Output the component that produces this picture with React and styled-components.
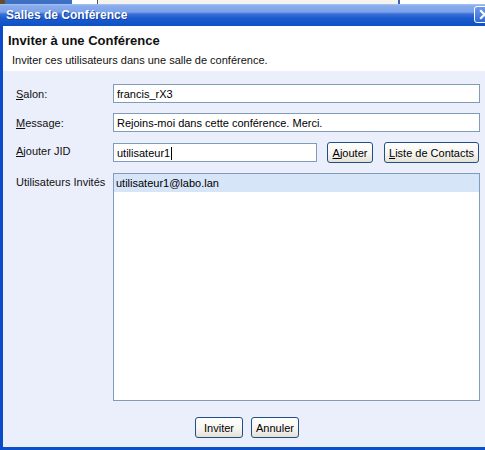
import React from "react";
import styled, { createGlobalStyle } from "styled-components";

const GlobalStyle = createGlobalStyle`
  html, body {
    margin: 0;
    padding: 0;
    background: #ffffff;
  }
  body {
    width: 485px;
    height: 450px;
    overflow: hidden;
    font-family: "Liberation Sans", Arial, sans-serif;
    font-size: 11px;
    color: #000;
  }
`;

function App() {
  return (
    <>
      <GlobalStyle />
      <Page>
        <BehindBar>
          <Seg $w={5} $bg="#6b4a2a" />
          <Seg $w={67} $bg="#3d6fc2" />
          <Seg $w={25} $bg="#ffffff" />
          <MenuStrip>
            <MenuItem>Accueil</MenuItem>
            <MenuItem>Contacts</MenuItem>
            <MenuItem>Actions</MenuItem>
            <MenuItem>Aide</MenuItem>
          </MenuStrip>
          <Seg $w={2} $bg="#3a63c0" />
          <Seg $w={85} $bg="#ffffff" />
        </BehindBar>

        <TitleBar>
          <TitleText>Salles de Conférence</TitleText>
          <CloseButton>
            <svg width="13" height="13" viewBox="0 0 13 13">
              <path d="M3 3 L10 10 M10 3 L3 10" stroke="#fff" strokeWidth="2.2" strokeLinecap="square" />
            </svg>
          </CloseButton>
        </TitleBar>

        <Frame>
          <Header>
            <HeaderTitle>Inviter à une Conférence</HeaderTitle>
            <HeaderSub>Inviter ces utilisateurs dans une salle de conférence.</HeaderSub>
          </Header>

          <Body>
            <Form>
              <Label>
                <u>S</u>alon:
              </Label>
              <Field>francis_rX3</Field>

              <Label>
                <u>M</u>essage:
              </Label>
              <Field>Rejoins-moi dans cette conférence. Merci.</Field>

              <Label $top>
                <u>A</u>jouter JID
              </Label>
              <JidRow>
                <Field $grow>
                  utilisateur1
                  <Caret />
                </Field>
                <Button $w={46} $ml={10}>
                  <u>A</u>jouter
                </Button>
                <Button $w={95} $ml={11}>
                  <u>L</u>iste de Contacts
                </Button>
              </JidRow>

              <Label $top>Utilisateurs Invités</Label>
              <List>
                <ListItem $selected>utilisateur1@labo.lan</ListItem>
              </List>
            </Form>

            <Footer>
              <Button $w={48}>Inviter</Button>
              <Button $w={48}>Annuler</Button>
            </Footer>
          </Body>
        </Frame>
      </Page>
    </>
  );
}

const Page = styled.div`
  width: 485px;
  height: 450px;
  display: flex;
  flex-direction: column;
  overflow: hidden;
`;

const BehindBar = styled.div`
  height: 4px;
  display: flex;
  overflow: hidden;
  flex-shrink: 0;
`;

const Seg = styled.div`
  width: ${props => props.$w}px;
  flex-shrink: 0;
  background: ${props => props.$bg};
`;

const MenuStrip = styled.div`
  width: 301px;
  flex-shrink: 0;
  display: flex;
  gap: 13px;
  padding-left: 9px;
  box-sizing: border-box;
  background: #f4f3ee;
  border-left: 1px solid #555;
  overflow: hidden;
`;

const MenuItem = styled.span`
  font-size: 11px;
  line-height: 13px;
  margin-top: -10px;
  color: #222;
  white-space: nowrap;
`;

const TitleBar = styled.div`
  height: 22px;
  flex-shrink: 0;
  display: flex;
  align-items: center;
  justify-content: space-between;
  padding-left: 6px;
  box-sizing: border-box;
  background: linear-gradient(
    to bottom,
    #a8c3f1 0px,
    #88abec 2px,
    #7ca2e9 8px,
    #3a70d8 10px,
    #1d5ccf 14px,
    #0b51c6 100%
  );
`;

const TitleText = styled.span`
  color: #ffffff;
  font-weight: bold;
  font-size: 12px;
  text-shadow: 1px 1px 0 #163f9c;
`;

const CloseButton = styled.div`
  width: 21px;
  height: 17px;
  margin-right: -10px;
  margin-top: -1px;
  flex-shrink: 0;
  display: flex;
  align-items: center;
  justify-content: center;
  box-sizing: border-box;
  border: 1px solid #ffffff;
  border-radius: 3px;
  background: linear-gradient(to bottom, #6f9bec, #2f6adb);
`;

const Frame = styled.div`
  flex: 1;
  display: flex;
  flex-direction: column;
  border-left: 3px solid #0a4bc8;
  border-bottom: 3px solid #0a50c8;
  min-height: 0;
`;

const Header = styled.div`
  height: 45px;
  flex-shrink: 0;
  box-sizing: border-box;
  background: #ffffff;
  padding: 7px 0 0 5px;
`;

const HeaderTitle = styled.div`
  font-weight: bold;
  font-size: 13px;
  line-height: 16px;
  color: #111;
`;

const HeaderSub = styled.div`
  margin: 5px 0 0 4px;
  font-size: 11px;
  line-height: 13px;
  color: #111;
`;

const Body = styled.div`
  flex: 1;
  display: flex;
  flex-direction: column;
  background: #ebeefb;
  padding: 13px 5px 9px 13px;
  min-height: 0;
`;

const Form = styled.div`
  flex: 1;
  display: grid;
  grid-template-columns: 97px 1fr;
  grid-template-rows: 19px 19px 21px 1fr;
  row-gap: 10px;
  min-height: 0;
`;

const Label = styled.div`
  display: flex;
  align-items: ${props => (props.$top ? "flex-start" : "center")};
  padding-top: ${props => (props.$top ? "3px" : "2px")};
  box-sizing: border-box;
  font-size: 11px;
  line-height: 13px;
  color: #111;
  white-space: nowrap;
`;

const Field = styled.div`
  height: 19px;
  ${props => (props.$grow ? "flex: 1;" : "")}
  box-sizing: border-box;
  border: 1px solid #7f9db9;
  background: #ffffff;
  padding: 2px 3px 0;
  font-size: 11px;
  line-height: 15px;
  color: #000;
  white-space: nowrap;
  overflow: hidden;
`;

const Caret = styled.span`
  display: inline-block;
  width: 1px;
  height: 13px;
  margin-left: 1px;
  vertical-align: -3px;
  background: #000;
`;

const JidRow = styled.div`
  display: flex;
  align-items: center;
  margin-right: 1px;
`;

const Button = styled.div`
  width: ${props => props.$w}px;
  margin-left: ${props => props.$ml || 0}px;
  height: 21px;
  flex-shrink: 0;
  box-sizing: border-box;
  display: flex;
  align-items: center;
  justify-content: center;
  border: 1px solid #1f4f86;
  border-radius: 3px;
  background: linear-gradient(to bottom, #ffffff 0%, #f6f5f1 55%, #e4e1d6 100%);
  font-size: 11px;
  color: #000;
  white-space: nowrap;
`;

const List = styled.div`
  box-sizing: border-box;
  border: 1px solid #7f9db9;
  background: #ffffff;
  min-height: 0;
`;

const ListItem = styled.div`
  height: 18px;
  line-height: 19px;
  padding-left: 2px;
  font-size: 11px;
  color: #000;
  background: ${props => (props.$selected ? "#d7e5f8" : "transparent")};
`;

const Footer = styled.div`
  display: flex;
  justify-content: center;
  gap: 8px;
  margin-top: 16px;
  padding-right: 2px;
`;

export default App;
